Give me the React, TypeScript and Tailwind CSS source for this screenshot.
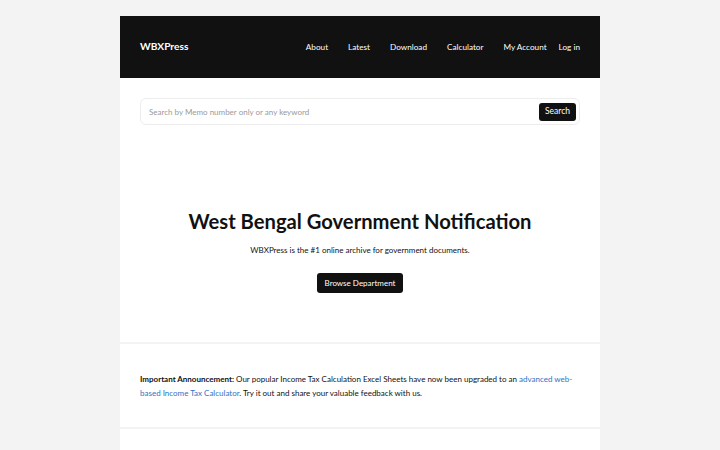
import React from "react";

const navLinks = ["About", "Latest", "Download", "Calculator", "My Account"];

const App: React.FC = () => {
  return (
    <div
      className="min-h-[450px] bg-[#f3f3f3] pt-4 text-[#111]"
      style={{ fontFamily: "Lato, 'Noto Sans', sans-serif" }}
    >
      <div className="mx-auto w-[480px] bg-white">
        {/* ========================= HEADER ========================= */}
        <header className="flex h-[62px] items-center justify-between bg-[#111] px-5 text-white">
          <div className="text-[10.2px] font-bold">WBXPress</div>
          <nav className="flex items-center text-[8.2px]">
            {navLinks.map((l) => (
              <a key={l} className="ml-[20px] first:ml-0">
                {l}
              </a>
            ))}
            <a className="ml-[12px]">Log in</a>
          </nav>
        </header>

        {/* ========================= SEARCH ========================= */}
        <div className="px-5 pt-5">
          <div className="flex h-[27px] items-center rounded-md border border-[#ededed] pl-2 pr-[3px]">
            <input
              placeholder="Search by Memo number only or any keyword"
              className="flex-1 bg-transparent text-[8px] outline-none placeholder:text-[#9a9a9a]"
            />
            <button className="h-[18px] rounded-[3px] bg-[#111] px-[6px] text-[8.5px] text-white">
              Search
            </button>
          </div>
        </div>

        {/* ========================= HERO ========================= */}
        <section className="flex h-[217px] flex-col items-center justify-end pb-[49px]">
          <h1 className="text-[20.2px] font-bold leading-none">
            West Bengal Government Notification
          </h1>
          <p className="mt-[13px] text-[8px]">
            WBXPress is the #1 online archive for government documents.
          </p>
          <button className="mt-[17px] h-[20px] rounded-[3px] bg-[#111] px-2 text-[8px] text-white">
            Browse Department
          </button>
        </section>

        <div className="h-[2px] bg-[#f3f3f3]" />

        {/* ========================= ANNOUNCEMENT ========================= */}
        <section className="flex h-[83px] items-center px-5">
          <p className="text-[8px] leading-[14px]">
            <strong>Important Announcement:</strong> Our popular Income Tax
            Calculation Excel Sheets have now been upgraded to an{" "}
            <a className="text-[#2f72c4]">
              advanced web-based Income Tax Calculator
            </a>
            . Try it out and share your valuable feedback with us.
          </p>
        </section>

        <div className="h-[2px] bg-[#f3f3f3]" />
        <div className="h-[30px]" />
      </div>
    </div>
  );
};

export default App;
